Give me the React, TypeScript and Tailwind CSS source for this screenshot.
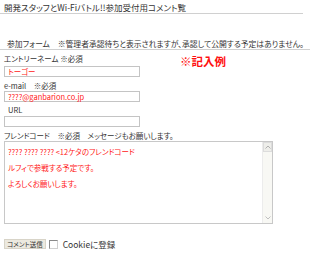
import React from "react";

const font = "[font-family:'Noto_Sans_CJK_JP','Noto_Sans',sans-serif] [font-feature-settings:'palt']";

const Field = ({ value }: { value?: string }) => (
  <div className="w-[136px] h-[11px] border border-[#c4c4c4] bg-white flex items-center pl-[3px]">
    <span className="text-[7.5px] leading-[9px] text-[#ff2020] whitespace-nowrap">{value}</span>
  </div>
);

export default function App() {
  return (
    <div className={`w-[320px] h-[256px] bg-white text-[#333] overflow-hidden ${font}`}>
      {/* title */}
      <div className="w-[303px] h-[14px] border-b border-[#d0d0d0] pt-[2px] pl-[4px]">
        <div className="text-[8.5px] leading-[10px] whitespace-nowrap">開発スタッフとWi-Fiバトル!!参加受付用コメント覧</div>
      </div>

      {/* notice */}
      <div className="w-[310px] h-[11px] border-b border-[#d0d0d0] mt-[25px] pl-[7px]">
        <div className="text-[7.8px] leading-[9px] whitespace-nowrap">
          参加フォーム　※管理者承認待ちと表示されますが、承認して公開する予定はありません。
        </div>
      </div>

      {/* form */}
      <div className="pl-[4px] pt-[4px] text-[7.5px] leading-[10px] whitespace-nowrap">
        <div className="flex">
          <div className="w-[176px]">
            <div className="h-[10px]">エントリーネーム ※必須</div>
            <div className="mt-[2px]">
              <Field value="トーゴー" />
            </div>
          </div>
          <div className="text-[11.5px] leading-[12px] font-bold text-[#ff1010] mt-[1px]">※記入例</div>
        </div>

        <div className="mt-[4px] h-[10px]">e-mail　※必須</div>
        <div>
          <Field value="????@ganbarion.co.jp" />
        </div>

        <div className="mt-[3px] h-[10px] pl-[4px]">URL</div>
        <div className="mt-[1px]">
          <Field />
        </div>

        <div className="mt-[4px] h-[10px]">フレンドコード　※必須　メッセージもお願いします。</div>

        {/* textarea */}
        <div className="w-[269px] h-[83px] border border-[#c8c8c8] bg-white flex">
          <div className="flex-1 pl-[3px] pt-[5px] text-[7.5px] leading-[9px] text-[#ff2020] flex flex-col gap-[7px]">
            <div>???? ???? ???? &lt;12ケタのフレンドコード</div>
            <div>ルフィで参戦する予定です。</div>
            <div>よろしくお願いします。</div>
          </div>
          <div className="w-[10px] h-full bg-[#f8f8f4] border-l border-[#ececec] flex flex-col justify-between">
            <div className="h-[10px] bg-[#eeeeea] border border-[#dcdcdc] flex items-center justify-center">
              <svg width="6" height="4" viewBox="0 0 6 4">
                <path d="M0.5 3.5 L3 1 L5.5 3.5" fill="none" stroke="#b0b0b0" strokeWidth="1" />
              </svg>
            </div>
            <div className="h-[10px] flex items-center justify-center">
              <svg width="6" height="4" viewBox="0 0 6 4">
                <path d="M0.5 0.5 L3 3 L5.5 0.5" fill="none" stroke="#c0c0c0" strokeWidth="1" />
              </svg>
            </div>
          </div>
        </div>

        {/* submit */}
        <div className="mt-[15px] h-[10px] flex items-center">
          <div className="h-[10px] px-[2px] bg-[#ece9df] border border-[#d8d4c8] text-[6.5px] leading-[8px] flex items-center">
            コメント送信
          </div>
          <div className="ml-[3px] w-[9px] h-[9px] border border-[#8a8a8a] border-r-[#d0d0d0] border-b-[#d0d0d0] bg-white" />
          <div className="ml-[5px] text-[8.5px]">Cookieに登録</div>
        </div>
      </div>
    </div>
  );
}
